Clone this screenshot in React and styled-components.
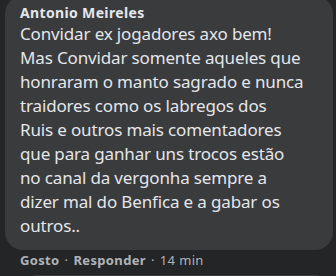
import React from 'react'
import styled, { createGlobalStyle } from 'styled-components'

const Global = createGlobalStyle`
  html, body {
    margin: 0;
    padding: 0;
    background: #242526;
  }
  body {
    font-family: "Segoe UI", "Noto Sans", "Open Sans", sans-serif;
  }
`

const Page = styled.div`
  width: 336px;
  height: 276px;
  overflow: hidden;
  padding: 0 3px 0 5px;
  box-sizing: border-box;
`

const Bubble = styled.div`
  margin-top: -4px;
  background: #3a3b3c;
  border-radius: 18px;
  padding: 8px 12px 12px 15px;
`

const Author = styled.div`
  color: #e4e6eb;
  font-size: 14px;
  font-weight: 700;
  line-height: 18px;
  letter-spacing: 0.35px;
`

const Body = styled.div`
  color: #e4e6eb;
  font-size: 17px;
  line-height: 24px;
  letter-spacing: -0.15px;
`

const Meta = styled.div`
  display: flex;
  align-items: center;
  gap: 5px;
  padding: 1px 0 0 15px;
  font-size: 13px;
  line-height: 18px;
  letter-spacing: 0.35px;
  color: #b0b3b8;
`

const Action = styled.span`
  font-weight: 700;
`

const Time = styled.span`
  font-weight: 400;
`

const NextBubble = styled.div`
  margin: 6px 0 0 15px;
  height: 20px;
  background: #3a3b3c;
  border-radius: 18px 18px 0 0;
`

const lines = [
  'Convidar ex jogadores axo bem!',
  'Mas Convidar somente aqueles que',
  'honraram o manto sagrado e nunca',
  'traidores como os labregos dos',
  'Ruis e outros mais comentadores',
  'que para ganhar uns trocos estão',
  'no canal da vergonha sempre a',
  'dizer mal do Benfica e a gabar os',
  'outros..',
]

export default function App() {
  return (
    <Page>
      <Global />
      <Bubble>
        <Author>Antonio Meireles</Author>
        <Body>
          {lines.map((l, i) => (
            <div key={i}>{l}</div>
          ))}
        </Body>
      </Bubble>
      <Meta>
        <Action>Gosto</Action>
        <span>·</span>
        <Action>Responder</Action>
        <span>·</span>
        <Time>14 min</Time>
      </Meta>
      <NextBubble />
    </Page>
  )
}
